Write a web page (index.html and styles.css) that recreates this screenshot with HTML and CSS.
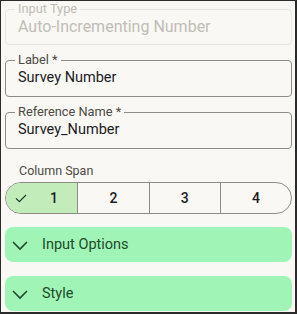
FILE: index.html
```html
<!DOCTYPE html>
<html>
<head>
    <meta charset="UTF-8">
    <title>Field Settings</title>
    <link rel="stylesheet" href="styles.css">
</head>
<body>
    <div class="panel">
        <fieldset class="field disabled">
            <legend>Input Type</legend>
            <div class="value">Auto-Incrementing Number</div>
        </fieldset>

        <fieldset class="field">
            <legend>Label *</legend>
            <div class="value">Survey Number</div>
        </fieldset>

        <fieldset class="field">
            <legend>Reference Name *</legend>
            <div class="value">Survey_Number</div>
        </fieldset>

        <div class="span-label">Column Span</div>
        <div class="segmented">
            <div class="seg selected">
                <svg class="check" viewBox="0 0 24 24" width="16" height="16"><path d="M4.5 12.5l5 5 10-10" fill="none" stroke="#1d3b22" stroke-width="1.8"/></svg>
                <span>1</span>
            </div>
            <div class="seg"><span>2</span></div>
            <div class="seg"><span>3</span></div>
            <div class="seg"><span>4</span></div>
        </div>

        <div class="accordion">
            <svg class="chevron" viewBox="0 0 24 24" width="24" height="24"><path d="M5 9l7 7 7-7" fill="none" stroke="#1e4a2b" stroke-width="1.6"/></svg>
            <span>Input Options</span>
        </div>
        <div class="accordion">
            <svg class="chevron" viewBox="0 0 24 24" width="24" height="24"><path d="M5 9l7 7 7-7" fill="none" stroke="#1e4a2b" stroke-width="1.6"/></svg>
            <span>Style</span>
        </div>
    </div>
</body>
</html>
```

FILE: styles.css
```css
html, body {
    margin: 0;
    padding: 0;
}

body {
    width: 297px;
    height: 314px;
    font-family: Roboto, "Liberation Sans", sans-serif;
    background-color: #f9f8f4;
}

.panel {
    box-sizing: border-box;
    width: 297px;
    height: 314px;
    border-style: solid;
    border-color: #2b2b2b;
    border-width: 1px 2px 2px 1px;
    padding: 1px 3px 0 4px;
    display: flex;
    flex-direction: column;
}

.field {
    margin: 0;
    padding: 0 12px 7px 12px;
    border: 1px solid #8d8c87;
    border-radius: 4px;
    margin-bottom: 8px;
}

.field legend {
    padding: 0 3px;
    margin-left: -3px;
    font-size: 12.8px;
    line-height: 14px;
    color: #4c4a44;
}

.field .value {
    font-size: 14.5px;
    line-height: 22px;
    color: #1c1b1f;
}

.field.disabled {
    border-color: #e7e5df;
    padding-bottom: 6px;
}

.field.disabled legend,
.field.disabled .value {
    color: #c0bdb6;
}

.field.disabled .value {
    font-size: 16px;
}

.span-label {
    font-size: 12.5px;
    line-height: 16px;
    color: #4c4a44;
    padding-left: 14px;
    margin-top: 6px;
    margin-bottom: 3px;
}

.segmented {
    display: grid;
    grid-template-columns: repeat(4, 1fr);
    height: 32px;
    border: 1px solid #8d8c87;
    border-radius: 16px;
    overflow: hidden;
    box-sizing: border-box;
}

.seg {
    display: flex;
    align-items: center;
    justify-content: center;
    border-left: 1px solid #8d8c87;
    font-size: 14px;
    font-weight: 500;
    color: #1c1b1f;
}

.seg:first-child {
    border-left: none;
}

.seg.selected {
    background-color: #c2ecba;
    justify-content: flex-start;
    padding-left: 7px;
    gap: 21px;
}

.accordion {
    display: flex;
    align-items: center;
    height: 35px;
    margin-top: 13px;
    padding-left: 3px;
    gap: 10px;
    background-color: #a0f5b6;
    border-radius: 8px;
    font-size: 14.5px;
    color: #1e4a2b;
}

.accordion + .accordion {
    margin-top: 14px;
}
```
